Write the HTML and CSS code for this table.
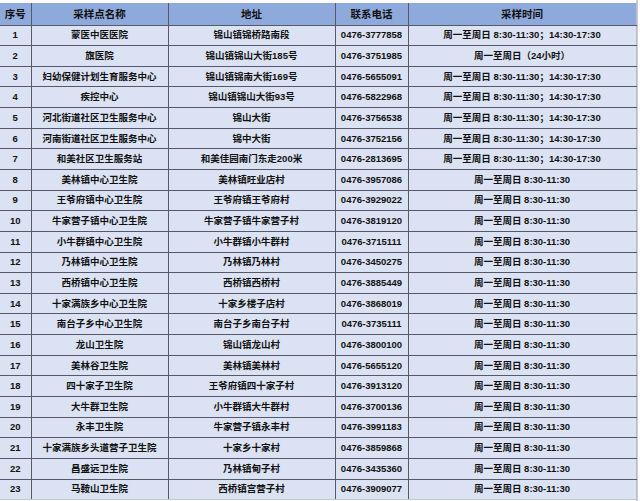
FILE: index.html
```html
<!DOCTYPE html>
<html lang="zh">
<head>
<meta charset="utf-8">
<link rel="stylesheet" href="styles.css">
</head>
<body>
<div class="sheet">
<table class="grid">
<colgroup>
<col class="c-no"><col class="c-name"><col class="c-addr"><col class="c-tel"><col class="c-time">
</colgroup>
<thead>
<tr><th>序号</th><th>采样点名称</th><th>地址</th><th>联系电话</th><th>采样时间</th></tr>
</thead>
<tbody>
<tr><td>1</td><td>蒙医中医医院</td><td>锦山镇锦桥路南段</td><td>0476-3777858</td><td>周一至周日 8:30-11:30；14:30-17:30</td></tr>
<tr><td>2</td><td>旗医院</td><td>锦山镇锦山大街185号</td><td>0476-3751985</td><td>周一至周日（24小时）</td></tr>
<tr><td>3</td><td>妇幼保健计划生育服务中心</td><td>锦山镇锦南大街169号</td><td>0476-5655091</td><td>周一至周日 8:30-11:30；14:30-17:30</td></tr>
<tr><td>4</td><td>疾控中心</td><td>锦山镇锦山大街93号</td><td>0476-5822968</td><td>周一至周日 8:30-11:30；14:30-17:30</td></tr>
<tr><td>5</td><td>河北街道社区卫生服务中心</td><td>锦山大街</td><td>0476-3756538</td><td>周一至周日 8:30-11:30；14:30-17:30</td></tr>
<tr><td>6</td><td>河南街道社区卫生服务中心</td><td>锦中大街</td><td>0476-3752156</td><td>周一至周日 8:30-11:30；14:30-17:30</td></tr>
<tr><td>7</td><td>和美社区卫生服务站</td><td>和美佳园南门东走200米</td><td>0476-2813695</td><td>周一至周日 8:30-11:30；14:30-17:30</td></tr>
<tr><td>8</td><td>美林镇中心卫生院</td><td>美林镇旺业店村</td><td>0476-3957086</td><td>周一至周日 8:30-11:30</td></tr>
<tr><td>9</td><td>王爷府镇中心卫生院</td><td>王爷府镇王爷府村</td><td>0476-3929022</td><td>周一至周日 8:30-11:30</td></tr>
<tr><td>10</td><td>牛家营子镇中心卫生院</td><td>牛家营子镇牛家营子村</td><td>0476-3819120</td><td>周一至周日 8:30-11:30</td></tr>
<tr><td>11</td><td>小牛群镇中心卫生院</td><td>小牛群镇小牛群村</td><td>0476-3715111</td><td>周一至周日 8:30-11:30</td></tr>
<tr><td>12</td><td>乃林镇中心卫生院</td><td>乃林镇乃林村</td><td>0476-3450275</td><td>周一至周日 8:30-11:30</td></tr>
<tr><td>13</td><td>西桥镇中心卫生院</td><td>西桥镇西桥村</td><td>0476-3885449</td><td>周一至周日 8:30-11:30</td></tr>
<tr><td>14</td><td>十家满族乡中心卫生院</td><td>十家乡楼子店村</td><td>0476-3868019</td><td>周一至周日 8:30-11:30</td></tr>
<tr><td>15</td><td>南台子乡中心卫生院</td><td>南台子乡南台子村</td><td>0476-3735111</td><td>周一至周日 8:30-11:30</td></tr>
<tr><td>16</td><td>龙山卫生院</td><td>锦山镇龙山村</td><td>0476-3800100</td><td>周一至周日 8:30-11:30</td></tr>
<tr><td>17</td><td>美林谷卫生院</td><td>美林镇美林村</td><td>0476-5655120</td><td>周一至周日 8:30-11:30</td></tr>
<tr><td>18</td><td>四十家子卫生院</td><td>王爷府镇四十家子村</td><td>0476-3913120</td><td>周一至周日 8:30-11:30</td></tr>
<tr><td>19</td><td>大牛群卫生院</td><td>小牛群镇大牛群村</td><td>0476-3700136</td><td>周一至周日 8:30-11:30</td></tr>
<tr><td>20</td><td>永丰卫生院</td><td>牛家营子镇永丰村</td><td>0476-3991183</td><td>周一至周日 8:30-11:30</td></tr>
<tr><td>21</td><td>十家满族乡头道营子卫生院</td><td>十家乡十家村</td><td>0476-3859868</td><td>周一至周日 8:30-11:30</td></tr>
<tr><td>22</td><td>昌盛远卫生院</td><td>乃林镇甸子村</td><td>0476-3435360</td><td>周一至周日 8:30-11:30</td></tr>
<tr><td>23</td><td>马鞍山卫生院</td><td>西桥镇宫营子村</td><td>0476-3909077</td><td>周一至周日 8:30-11:30</td></tr>
</tbody>
</table>
</div>
</body>
</html>
```
FILE: styles.css
```css
html, body {
  margin: 0;
  padding: 0;
  background: #ffffff;
}
.sheet {
  padding: 3px 0 0 0;
  width: 640px;
  height: 501px;
  box-sizing: border-box;
  overflow: hidden;
  background: linear-gradient(to right, transparent 636px, #c9ccd4 636px, #c9ccd4 638px, transparent 638px);
}
.grid {
  border-collapse: collapse;
  table-layout: fixed;
  width: 636px;
  font-family: "Liberation Sans", "Noto Sans CJK SC", sans-serif;
  font-weight: bold;
  color: #111111;
}
.c-no { width: 31px; }
.c-name { width: 137px; }
.c-addr { width: 167px; }
.c-tel { width: 73px; }
.c-time { width: 228px; }
.grid th {
  background: #8eaadc;
  height: 21.5px;
  padding: 0;
  font-size: 10.5px;
  line-height: 12px;
  text-align: center;
  border-right: 1px solid #555a66;
  border-bottom: 1px solid #555a66;
}
.grid td {
  background: #dbe2f3;
  height: 19.65px;
  padding: 0;
  font-size: 9.5px;
  line-height: 12px;
  text-align: center;
  white-space: nowrap;
  overflow: hidden;
  border-right: 1px solid #555a66;
  border-bottom: 1px solid #555a66;
}
.grid th:last-child, .grid td:last-child {
  border-right: 1px solid #b8bdc9;
}
.grid tbody tr:last-child td {
  border-bottom: 1px solid #c4c8d2;
}
```
